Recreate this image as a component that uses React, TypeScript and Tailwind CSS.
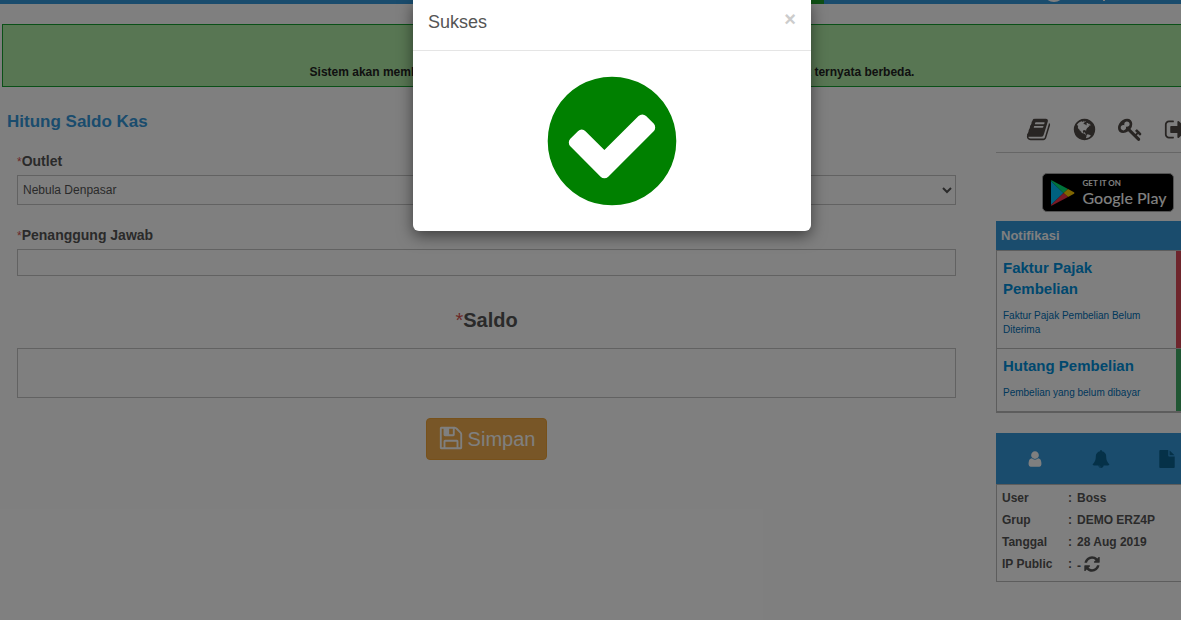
import React from "react";

const ICONS = {
  check:
    "M1412 734q0-28-18-46l-91-90q-19-19-45-19t-45 19l-408 407-226-226q-19-19-45-19t-45 19l-91 90q-18 18-18 46 0 27 18 45l362 362q19 19 45 19 27 0 46-19l543-543q18-18 18-45zm252 162q0 209-103 385.5t-279.5 279.5-385.5 103-385.5-103-279.5-279.5-103-385.5 103-385.5 279.5-279.5 385.5-103 385.5 103 279.5 279.5 103 385.5z",
  book: "M1703 478q40 57 18 129l-275 906q-19 64-76.5 107.5t-122.5 43.5h-923q-77 0-148.5-53.5t-99.5-131.5q-24-67-2-127 0-4 3-27t4-37q1-8-3-21.5t-3-19.5q2-11 8-21t16.5-23.5 16.5-23.5q23-38 45-91.5t30-91.5q3-10 .5-30t-.5-28q3-11 17-28t17-23q21-36 42-92t25-90q1-9-2.5-32t.5-28q4-13 22-30.5t22-22.5q19-26 42.5-84.5t27.5-96.5q1-8-3-25.5t-2-26.5q2-8 9-18t18-23 17-21q8-12 16.5-30.5t15-35 16-36 19.5-32 26.5-23.5 36-11.5 47.5 5.5l-1 3q38-9 51-9h761q74 0 114 56t18 130l-274 906q-36 119-71.5 153.5t-128.5 34.5h-869q-27 0-38 15-11 16-1 43 24 70 144 70h923q29 0 56-15.5t35-41.5l300-987q7-22 5-57 38 15 59 43zm-1064 2q-4 13 2 22.5t20 9.5h608q13 0 25.5-9.5t16.5-22.5l21-64q4-13-2-22.5t-20-9.5h-608q-13 0-25.5 9.5t-16.5 22.5zm-83 256q-4 13 2 22.5t20 9.5h608q13 0 25.5-9.5t16.5-22.5l21-64q4-13-2-22.5t-20-9.5h-608q-13 0-25.5 9.5t-16.5 22.5z",
  globe:
    "M896 128q209 0 385.5 103t279.5 279.5 103 385.5-103 385.5-279.5 279.5-385.5 103-385.5-103-279.5-279.5-103-385.5 103-385.5 279.5-279.5 385.5-103zm274 521q-2 1-9.5 9.5t-13.5 9.5q2 0 4.5-5t5-11 3.5-7q6-7 22-15 14-6 52-12 34-8 51 11-2-2 9.5-13t14.5-12q3-2 15-4.5t15-7.5l2-22q-12 1-17.5-7t-6.5-21q0 2-6 8 0-7-4.5-8t-11.5 1-9 1q-10-3-15-7.5t-8-16.5-4-15q-2-5-9.5-11t-9.5-10q-1-2-2.5-5.5t-3-6.5-4-5.5-5.5-2.5-7 5-7.5 10-4.5 5q-3-2-6-1.5t-4.5 1-4.5 3-5 3.5q-3 2-8.5 3t-8.5 2q15-5-1-11-10-4-16-3 9-4 7.5-12t-8.5-14h5q-1-4-8.5-8.5t-17.5-8.5-13-6q-8-5-34-9.5t-33-.5q-5 6-4.5 10.5t4 14 3.5 12.5q1 6-5.5 13t-6.5 12q0 7 14 15.5t10 21.5q-3 8-16 16t-16 12q-5 8-1.5 18.5t10.5 16.5q2 2 1.5 4t-3.5 4.5-5.5 4-6.500 3.500l-3 2q-11 5-20.500-6t-13.500-26q-7-25-16-30-23-8-29 1-5-13-41-26-25-9-58-4 6-1 0-15-7-15-19-12 3-6 4-17.500t1-13.500q3-13 12-23 1-1 7-8.500t9.500-13.500.5-6q35 4 50-11 5-5 11.500-17t10.500-17q9-6 14-5.500t14.500 5.500 14.500 5q14 1 15.500-11t-7.500-20q12 1 3-17-4-7-8-9-12-4-27 5-8 4 2 8-1-1-9.500 10.500t-16.500 17.500-16-5q-1-1-5.500-13.500t-9.500-13.500q-8 0-16 15 3-8-11-15t-24-8q19-12-8-27-7-4-20.500-5t-19.500 4q-5 7-5.500 11.500t5 8 10.500 5.500 11.500 4 8.500 3q14 10 8 14-2 1-8.500 3.500t-11.500 4.500-6 4q-3 4 0 14t-2 14q-5-5-9-17.500t-7-16.500q7 9-25 6l-10-1q-4 0-16 2t-20.500 1-13.500-8q-4-8 0-20 1-4 4-2-4-3-11-9.500t-10-8.500q-46 15-94 41 6 1 12-1 5-2 13-6.500t10-5.500q34-14 42-7l5-5q14 16 20 25-7-4-30-1-20 6-22 12 7 12 5 18-4-3-11.500-10t-14.500-11-15-5q-16 0-22 1-146 80-235 222 7 7 12 8 4 1 5 9t2.500 11 11.500-3q9 8 3 19 1-1 44 27 19 17 21 21 3 11-10 18-1-2-9-9t-9-4q-3 5 .5 18.500t10.500 12.500q-7 0-9.500 16t-2.500 35.500-1 23.500l2 1q-3 12 5.500 34.500t21.500 19.500q-13 3 20 43 6 8 8 9 3 2 12 7.500t15 10 10 10.500q4 5 10 22.500t14 23.500q-2 6 9.500 20t10.500 23q-1 0-2.500 1t-2.500 1q3 7 15.500 14t15.500 13q1 3 2 10t3 11 8 2q2-20-24-62-15-25-17-29-3-5-5.500-15.500t-4.500-14.500q2 0 6 1.500t8.500 3.500 7.500 4 2 3q-3 7 2 17.500t12 18.500 17 19 12 13q6 6 14 19.500t0 13.500q9 0 20 10t17 20q5 8 8 26t5 24q2 7 8.500 13.500t12.500 9.500l16 8 13 7q5 2 18.500 10.500t21.500 11.500q10 4 16 4t14.500-2.500 13.500-3.500q15-2 29 15t21 21q36 19 55 11-2 1 .5 7.500t8 15.500 9 14.500 5.500 8.500q5 6 18 15t18 15q6-4 7-9-3 8 7 20t18 10q14-3 14-32-31 15-49-18 0-1-2.500-5.500t-4-8.500-2.500-8.500 0-7.500 5-3q9 0 10-3.500t-2-12.500-4-13q-1-8-11-20t-12-15q-5 9-16 8t-16-9q0 1-1.500 5.500t-1.500 6.500q-13 0-15-1 1-3 2.500-17.500t3.500-22.500q1-4 5.500-12t7.500-14.500 4-12.500-4.500-9.500-17.500-2.500q-19 1-26 20-1 3-3 10.500t-5 11.500-9 7q-7 3-24 2t-24-5q-13-8-22.500-29t-9.500-37q0-10 2.500-26.500t3-25-5.500-24.500q3-2 9-9.500t10-10.500q2-1 4.500-1.500t4.500 0 4-1.500 3-6q-1-1-4-3-3-3-4-3 7 3 28.500-1.500t27.500 1.500q15 11 22-2 0-1-2.500-9.500t-.5-13.500q5 27 29 9 3 3 15.500 5t17.500 5q3 2 7 5.500t5.500 4.500 5-.5 8.500-6.500q10 14 12 24 11 40 19 44 7 3 11 2t4.500-9.500 0-14-1.500-12.500l-1-8v-18l-1-8q-15-3-18.500-12t1.500-18.500 15-18.500q1-1 8-3.500t15.500-6.500 12.500-8q21-19 15-35 7 0 11-9-1 0-5-3t-7.500-5-4.500-2q9-5 2-16 5-3 7.500-11t7.500-10q9 12 21 2 7-8 1-16 5-7 20.500-10.500t18.500-9.500q7 2 8-2t1-12 3-12q4-5 15-9t13-5l17-11q3-4 0-4 18 2 31-11 10-11-6-20 3-6-3-9.500t-15-5.500q3-1 11.500-.5t10.500-1.500q15-10-7-16-17-5-43 12zm-163 877q206-36 351-189-3-3-12.500-4.500t-12.500-3.500q-18-7-24-8 1-7-2.500-13t-8-9-12.500-8-11-7q-2-2-7-6t-7-5.500-7.500-4.500-8.500-2-10 1l-3 1q-3 1-5.500 2.500t-5.500 3-4 3 0 2.500q-21-17-36-22-5-1-11-5.500t-10.500-7-10-1.500-11.500 7q-5 5-6 15t-2 13q-7-5 0-17.500t2-18.500q-3-6-10.500-4.500t-12 4.500-11.500 8.500-9 6.500-8.500 5.500-8.500 7.500q-3 4-6 12t-5 11q-2-4-11.500-6.500t-9.500-5.500q2 10 4 35t5 38q7 31-12 48-27 25-29 40-4 22 12 26 0 7-8 20.500t-7 21.500q0 6 2 16z",
  key: "M832 512q0-80-56-136t-136-56-136 56-56 136q0 42 19 83-41-19-83-19-80 0-136 56t-56 136 56 136 136 56 136-56 56-136q0-42-19-83 41 19 83 19 80 0 136-56t56-136zm851 704q0 17-49 66t-66 49q-9 0-28.5-16t-36.5-33-38.5-40-24.5-26l-96 96 220 220q28 28 28 68 0 42-39 81t-81 39q-40 0-68-28l-671-671q-176 131-365 131-163 0-265.5-102.5t-102.5-265.5q0-160 95-313t248-248 313-95q163 0 265.5 102.5t102.5 265.5q0 189-131 365l355 355 96-96q-3-3-26-24.5t-40-38.5-33-36.5-16-28.5q0-17 49-66t66-49q13 0 23 10 6 6 46 44.5t82 79.5 86.5 86 73 78 28.5 41z",
  signOut:
    "M704 1440q0 4 1 20t.5 26.5-3 23.5-10 19.5-20.5 6.5h-320q-119 0-203.5-84.5t-84.5-203.5v-704q0-119 84.5-203.5t203.5-84.5h320q13 0 22.5 9.5t9.5 22.5q0 4 1 20t.5 26.5-3 23.5-10 19.5-20.5 6.5h-320q-66 0-113 47t-47 113v704q0 66 47 113t113 47h312l11.5 1 11.5 3 8 5.5 7 9 2 13.5zm928-544q0 26-19 45l-544 544q-19 19-45 19t-45-19-19-45v-288h-448q-26 0-45-19t-19-45v-384q0-26 19-45t45-19h448v-288q0-26 19-45t45-19 45 19l544 544q19 19 19 45z",
  user: "M1536 1399q0 109-62.5 187t-150.5 78h-854q-88 0-150.5-78t-62.5-187q0-85 8.5-160.5t31.5-152 58.5-131 94-89 134.5-34.5q131 128 313 128t313-128q76 0 134.5 34.5t94 89 58.5 131 31.5 152 8.5 160.5zm-256-887q0 159-112.5 271.5t-271.5 112.5-271.5-112.5-112.5-271.5 112.5-271.5 271.5-112.5 271.5 112.5 112.5 271.5z",
  bell: "M912 1696q0-16-16-16-59 0-101.5-42.5t-42.5-101.5q0-16-16-16t-16 16q0 73 51.5 124.5t124.5 51.5q16 0 16-16zm816-288q0 52-38 90t-90 38h-448q0 106-75 181t-181 75-181-75-75-181h-448q-52 0-90-38t-38-90q50-42 91-88t85-119.5 74.5-158.5 50-206 19.5-260q0-152 117-282.5t307-158.5q-8-19-8-39 0-40 28-68t68-28 68 28 28 68q0 20-8 39 190 28 307 158.5t117 282.5q0 139 19.5 260t50 206 74.5 158.5 85 119.5 91 88z",
  file: "M1152 512v-472q22 14 36 28l408 408q14 14 28 36h-472zm-128 32q0 40 28 68t68 28h544v1056q0 40-28 68t-68 28h-1344q-40 0-68-28t-28-68v-1600q0-40 28-68t68-28h800v544z",
  save: "M512 1536h768v-384h-768v384zm896 0h128v-896q0-14-10-38.5t-20-34.5l-281-281q-10-10-34-20t-39-10v416q0 40-28 68t-68 28h-576q-40 0-68-28t-28-68v-416h-128v1280h128v-416q0-40 28-68t68-28h832q40 0 68 28t28 68v416zm-384-928v-320q0-13-9.5-22.5t-22.5-9.5h-192q-13 0-22.5 9.5t-9.5 22.5v320q0 13 9.5 22.5t22.5 9.5h192q13 0 22.5-9.5t9.5-22.5zm640 32v928q0 40-28 68t-68 28h-1344q-40 0-68-28t-28-68v-1344q0-40 28-68t68-28h928q40 0 88 20t76 48l280 280q28 28 48 76t20 88z",
  refresh:
    "M1639 1056q0 5-1 7-64 268-268 434.5t-478 166.5q-146 0-282.5-55t-243.5-157l-129 129q-19 19-45 19t-45-19-19-45v-448q0-26 19-45t45-19h448q26 0 45 19t19 45-19 45l-137 137q71 66 161 102t187 36q134 0 250-65t186-179q11-17 53-117 8-23 30-23h192q13 0 22.5 9.5t9.5 22.5zm25-800v448q0 26-19 45t-45 19h-448q-26 0-45-19t-19-45 19-45l138-138q-148-137-349-137-134 0-250 65t-186 179q-11 17-53 117-8 23-30 23h-199q-13 0-22.5-9.5t-9.5-22.5v-7q65-268 270-434.5t480-166.5q146 0 284 55.5t245 156.5l130-129q19-19 45-19t45 19 19 45z",
};

function Icon({ name, className }: { name: keyof typeof ICONS; className: string }) {
  return (
    <svg viewBox="0 0 1792 1792" fill="currentColor" aria-hidden="true" className={className}>
      <path d={ICONS[name]} />
    </svg>
  );
}

function TopBar() {
  return (
    <header className="flex h-1 justify-end overflow-hidden bg-[#3498db]">
      <div className="w-40 bg-[#1d9e28]" />
      <svg width="398" height="4" viewBox="0 0 398 4" aria-hidden="true">
        <circle cx="230" cy="-9" r="11" fill="#fff" />
        <rect x="279" y="0" width="2" height="1" fill="#fff" />
      </svg>
    </header>
  );
}

function CashForm() {
  return (
    <main className="min-w-0 flex-1 pt-[11px]">
      <h1 className="px-[5px] text-[17px] leading-6 font-bold text-[#3498db]">Hitung Saldo Kas</h1>
      <form className="px-[15px] pt-[17px]" onSubmit={(e) => e.preventDefault()}>
        <label htmlFor="outlet" className="block text-sm leading-5 font-bold">
          <span className="text-xs font-normal text-[#d9534f]">*</span>Outlet
        </label>
        <select
          id="outlet"
          className="mt-1 block h-[30px] w-full border border-[#c4c4c4] bg-white pr-[3px] pl-px text-xs text-[#555]"
        >
          <option>Nebula Denpasar</option>
        </select>
        <label htmlFor="pic" className="mt-5 block text-sm leading-5 font-bold">
          <span className="text-xs font-normal text-[#d9534f]">*</span>Penanggung Jawab
        </label>
        <input id="pic" className="mt-1 block h-[27px] w-full border border-[#c4c4c4] bg-white px-1 text-xs" />
        <label htmlFor="saldo" className="mt-[30px] block text-center text-xl leading-7 font-bold">
          <span className="font-normal text-[#d9534f]">*</span>Saldo
        </label>
        <input
          id="saldo"
          className="mt-[14px] block h-[50px] w-full border border-[#c4c4c4] bg-white px-2 text-center text-xl"
        />
        <div className="mt-5 flex justify-center">
          <button
            type="submit"
            className="flex h-[42px] items-center gap-1 rounded border border-[#eea236] bg-[#f0ad4e] px-[11px] text-xl text-white"
          >
            <Icon name="save" className="mb-0.5 size-[26px]" />
            Simpan
          </button>
        </div>
      </form>
    </main>
  );
}

function PlayBadge() {
  return (
    <a
      href="#play"
      className="mx-auto mt-5 flex h-[39px] w-[132px] items-center gap-2 rounded-[5px] border border-[#a6a6a6] bg-black pl-2 text-white"
    >
      <svg width="24" height="26" viewBox="0 0 24 26" aria-hidden="true">
        <path d="M0 1 0 25 12.500 13z" fill="#00c3ff" />
        <path d="M0 1Q0 0 1 .4L17 9 12.500 13z" fill="#00e676" />
        <path d="M17 9 23 12.200Q24 13 23 13.800L17 17 12.500 13z" fill="#ffcb00" />
        <path d="M12.500 13 17 17 1 25.600Q0 26 0 25z" fill="#f43249" />
      </svg>
      <span className="flex flex-col font-[Lato,sans-serif]">
        <span className="text-[8px] leading-[9px] font-bold">GET IT ON</span>
        <span className="text-base leading-[19px] font-medium whitespace-nowrap">Google Play</span>
      </span>
    </a>
  );
}

const SHORTCUTS: { name: keyof typeof ICONS; label: string }[] = [
  { name: "book", label: "Panduan" },
  { name: "globe", label: "Situs" },
  { name: "key", label: "Kata sandi" },
  { name: "signOut", label: "Keluar" },
];

const USER_ROWS = [
  ["User", "Boss"],
  ["Grup", "DEMO ERZ4P"],
  ["Tanggal", "28 Aug 2019"],
];

function Sidebar() {
  return (
    <aside className="w-[223px] shrink-0 pt-[11px]">
      <nav className="flex justify-center gap-[21px] border-b border-[#ccc] pt-[7px] pb-2.5 text-[#504a46]">
        {SHORTCUTS.map((s) => (
          <button key={s.name} type="button" aria-label={s.label}>
            <Icon name={s.name} className="size-[25px]" />
          </button>
        ))}
      </nav>
      <PlayBadge />
      <section className="mt-[9px]">
        <h2 className="h-[29px] bg-[#3498db] px-[5px] text-[13px] leading-[29px] font-bold text-white">Notifikasi</h2>
        <div className="border border-b-2 border-[#bbb]">
          <a href="#faktur" className="flex h-[98px] border-b border-[#bbb]">
            <span className="flex-1 px-1.5 pt-1.5">
              <span className="block w-32 text-[15px] leading-[21px] font-bold text-[#0090dd]">Faktur Pajak Pembelian</span>
              <span className="mt-2.5 block w-36 text-[10px] leading-[14px] text-[#0070b8]">
                Faktur Pajak Pembelian Belum Diterima
              </span>
            </span>
            <span className="w-[42px] bg-[#dc4a58]" />
          </a>
          <a href="#hutang" className="flex h-[62px]">
            <span className="flex-1 px-1.5 pt-1.5">
              <span className="block text-[15px] leading-[21px] font-bold text-[#0090dd]">Hutang Pembelian</span>
              <span className="mt-2.5 block text-[10px] leading-[14px] text-[#0070b8]">Pembelian yang belum dibayar</span>
            </span>
            <span className="w-[42px] bg-[#41ad66]" />
          </a>
        </div>
      </section>
      <section className="mt-5">
        <div className="flex h-[51px] items-center justify-center gap-12 bg-[#3498db] pr-[13px] text-[#0a6391]">
          <button type="button" aria-label="Pengguna" className="text-white">
            <Icon name="user" className="size-[18px]" />
          </button>
          <button type="button" aria-label="Pemberitahuan">
            <Icon name="bell" className="size-[18px]" />
          </button>
          <button type="button" aria-label="Dokumen">
            <Icon name="file" className="size-[18px]" />
          </button>
        </div>
        <div className="border border-[#bbb] px-[5px] pt-0.5 pb-1.5">
          <table className="text-left text-xs leading-[22px] font-bold">
            <tbody>
              {USER_ROWS.map(([k, v]) => (
                <tr key={k}>
                  <th className="w-[66px] p-0">{k}</th>
                  <td className="w-[9px] p-0">:</td>
                  <td className="p-0">{v}</td>
                </tr>
              ))}
              <tr>
                <th className="p-0">IP Public</th>
                <td className="p-0">:</td>
                <td className="flex h-[22px] items-center gap-0.5 p-0">
                  <span className="pt-1">-</span>
                  <button type="button" aria-label="Muat ulang">
                    <Icon name="refresh" className="size-[18px]" />
                  </button>
                </td>
              </tr>
            </tbody>
          </table>
        </div>
      </section>
    </aside>
  );
}

function SuccessDialog() {
  return (
    <div className="absolute inset-y-0 left-0 flex w-[calc(100%+43px)] items-start justify-center bg-black/50">
      <div
        role="dialog"
        aria-labelledby="dialog-title"
        className="w-[398px] rounded-b-md bg-white shadow-[0_5px_15px_rgba(0,0,0,0.5)]"
      >
        <div className="flex h-[51px] items-start justify-between border-b border-[#e5e5e5] px-[15px]">
          <h2 id="dialog-title" className="pt-[9px] text-lg leading-[26px] text-[#555]">
            Sukses
          </h2>
          <button type="button" aria-label="Tutup" className="pt-[9px] text-xl leading-5 font-bold text-[#ccc]">
            ×
          </button>
        </div>
        <div className="flex justify-center py-[15px]">
          <Icon name="check" className="size-[150px] text-[#008000]" />
        </div>
      </div>
    </div>
  );
}

export default function App() {
  return (
    <div className="relative min-h-screen overflow-hidden bg-white font-['Liberation_Sans',Arial,sans-serif] text-[#555]">
      <div className="w-[calc(100%+41px)]">
        <TopBar />
        <div className="pt-5 pl-0.5">
          <p className="border border-[#14a02e] bg-[#b0eda6] pt-[39px] pb-[5px] text-center text-xs leading-[17px] font-bold text-[#222]">
            Sistem akan membuat jurnal penyesuaian otomatis jika saldo kas pada sistem atau fisik ternyata berbeda.
          </p>
          <div className="mt-3 flex gap-[25px] pr-[3px]">
            <CashForm />
            <Sidebar />
          </div>
        </div>
      </div>
      <SuccessDialog />
    </div>
  );
}
